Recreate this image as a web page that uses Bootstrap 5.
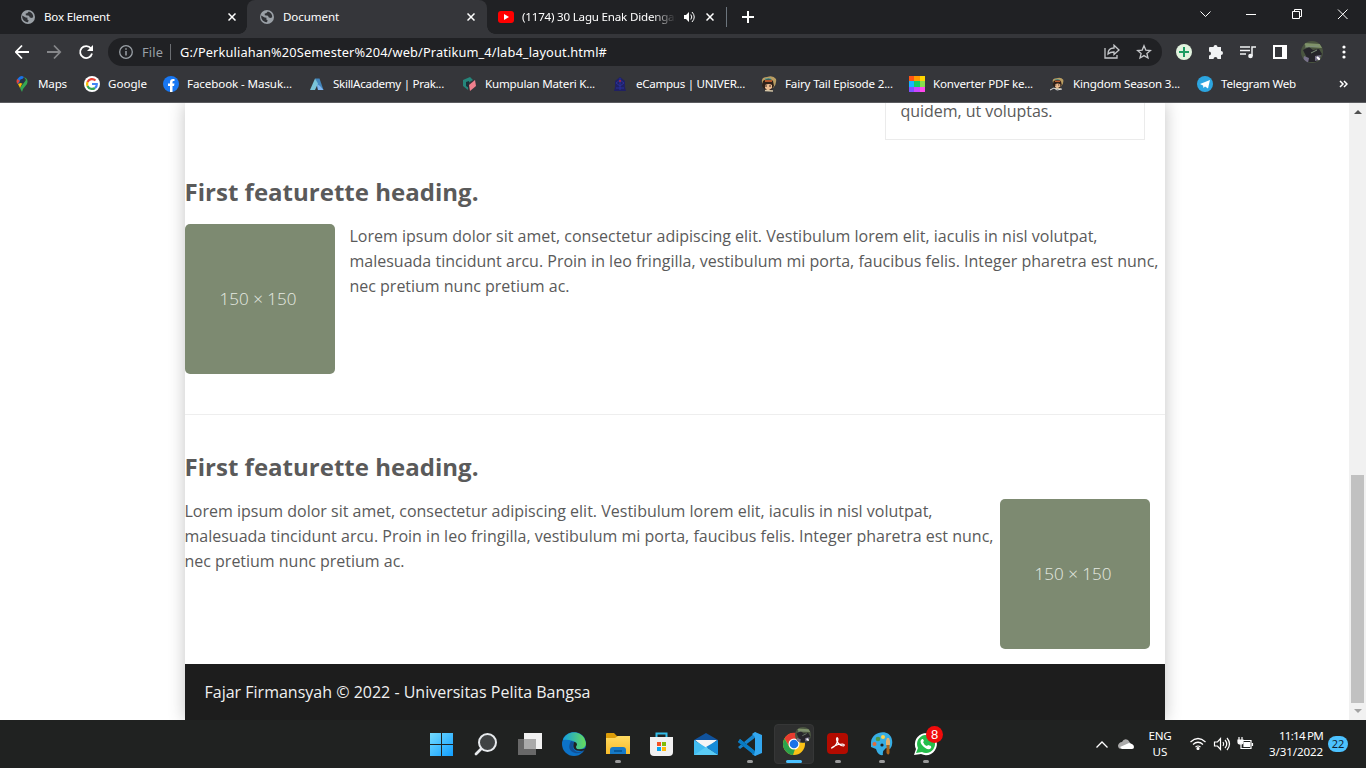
<!DOCTYPE html>
<html lang="en">
<head>
<meta charset="utf-8">
<title>Document</title>
<link rel="stylesheet" href="https://cdn.jsdelivr.net/npm/bootstrap@5.3.0/dist/css/bootstrap.min.css">
<style>
html,body{height:768px;overflow:hidden}
body{font-family:"Open Sans",sans-serif;background:#fff;color:#5a5a5a}
svg{display:block;flex:none}
.ui{font-family:"Noto Sans","Open Sans",sans-serif;font-size:11.6px;line-height:16px;color:#fff;white-space:nowrap}
.fit{display:inline-block;white-space:nowrap}
.tabstrip{height:34px;background:#202124;flex:none}
.tab{height:34px;width:240px;flex:none;padding-left:13px}
.tab.first-tab{width:247px;padding-left:21px}
.tab.last-tab{width:239px;padding-left:11px}
.tab.current{background:#35363a;border-radius:8px 8px 0 0;position:relative}
.tab.current::before,.tab.current::after{content:"";position:absolute;bottom:0;width:8px;height:8px}
.tab.current::before{left:-8px;background:radial-gradient(circle at 0 0,transparent 7.5px,#35363a 8px)}
.tab.current::after{right:-8px;background:radial-gradient(circle at 100% 0,transparent 7.5px,#35363a 8px)}
.tab-close{margin-left:auto;margin-right:12px}
.first-tab .tab-close{margin-right:11px}
.tab-title{margin-left:9px}
.fade-title{width:154px;overflow:hidden;margin-left:8px;-webkit-mask-image:linear-gradient(90deg,#000 130px,transparent)}
.toolbar{height:32px;background:#35363a;flex:none;padding-top:4px}
.omnibox{height:28px;width:1054px;border-radius:14px;background:#202124;margin-left:13px;padding-left:11px;padding-right:10px}
.url{font-size:12.8px}
.url-sep{width:1px;height:16px;background:#6b6e72;margin-left:7px;margin-right:9px}
.bookmarks{height:37px;background:#35363a;border-bottom:1px solid #5b5c60;flex:none;padding-left:14px}
.mark-grid{display:grid;grid-template-columns:70px 79px 146px 152px 151px 149px 148px 140px 148px 138px}
.view{height:617px;flex:none;overflow:hidden}
.sheet{width:980px;margin-left:184.5px;box-shadow:0 0 16px #c4c4c4;background:#fff}
.side{width:260px;height:37px;border:1px solid #ebebeb;border-top:0;margin-left:700px;padding-left:15px;line-height:17px}
.sheet section{padding-top:35px}
.sheet h2{font-size:24px;line-height:33px;font-weight:700;margin:0 0 16px;color:#5a5a5a}
.copy{font-size:16px;line-height:25px;margin:0}
.thumb{width:150px;height:150px;background:#7d8a71;border-radius:5px;color:#e6eae3;font-size:17px;font-weight:300;flex:none;padding-right:3px}
.foot{height:56px;background:#1d1d1d;color:#f0f0f0;padding-left:20px}
.scroll{width:17px;background:#f1f1f1}
.thumb-bar{width:13px;height:228px;background:#c1c1c1}
.taskbar{height:48px;background:#202221;flex:none}
.dock{margin-left:420px;width:528px}
.app{width:44px;height:48px;position:relative}
.app.active-app::before{content:"";position:absolute;inset:4px 2px;border-radius:4px;background:#2e2f2f;border:1px solid #363737}
.app svg{position:absolute;left:10px;top:12px}
.run::after{content:"";position:absolute;left:19px;top:40px;width:6px;height:3px;border-radius:2px;background:#9a9a9a}
.run.active-app::after{left:14px;width:16px;background:#4cc2ff}
.count{position:absolute;left:22px;top:6px;width:17px;height:17px;border-radius:50%;background:#f00b0b;color:#fff;font:13px/17px "Liberation Sans",sans-serif;text-align:center}
.tray{margin-left:148px}
.tray .lang{margin-left:13px;width:26px}
.tray .clock{margin-left:7px;width:62px}
.pill{width:20px;height:16px;border-radius:8px;background:#4cc2ff;color:#123;font-size:11px;text-align:center;margin-left:5px}
</style>
<script src="https://cdn.jsdelivr.net/npm/bootstrap@5.3.0/dist/js/bootstrap.bundle.min.js"></script>
</head>
<body class="d-flex flex-column m-0">
<svg width="0" height="0" class="position-absolute">
<defs>
<symbol id="globe" viewBox="0 0 14 14"><circle cx="7" cy="7" r="7" fill="#9aa0a6"/><path d="M1.2 5.5 4.7 7.6 6.5 7.8 6.3 9.6 7.6 10.3 7 12.2 5.2 12C2.7 11.2.9 8.5 1.2 5.5ZM7.8 1.5 6.2 3.3 4.7 3.6 4.8 5.3 8 5.7 8.8 7.5 11 8 12.2 7C12.3 4.2 10.6 2.1 7.8 1.5Z" fill="#303236"/></symbol>
<symbol id="close" viewBox="0 0 8 8"><path d="M.5.5l7 7M7.5.5l-7 7" stroke="#fff" stroke-width="1.5"/></symbol>
<symbol id="hero" viewBox="0 0 16 16"><path d="M1 6Q0 1 6 1 12-1 15 3 16 8 12 12H4Z" fill="#b99d62"/><path d="M2 5Q8 0 12 5l1 5-3 4H4L1 10Z" fill="#302119"/><path d="M4 3h6" stroke="#3aa0a6"/><path d="M4 5h7" stroke="#dd6934" stroke-width="1.5"/><path d="M4 9q4-2 7 0v3l-3 2H6L4 12Z" fill="#edbc91"/><path d="M5 9v2m4-2v2" stroke="#38221d"/><path d="M4 14.500l8 .5" stroke="#d4c5a5" stroke-width="1.500"/></symbol>
<linearGradient id="win" x2="1" y2="1"><stop stop-color="#75dcff"/><stop offset="1" stop-color="#109eff"/></linearGradient>
<linearGradient id="edg" x2="1"><stop stop-color="#149fe0"/><stop offset="1" stop-color="#67dd59"/></linearGradient>
<linearGradient id="fold" y2="1" x2="0"><stop stop-color="#ffdb62"/><stop offset="1" stop-color="#f8bb2a"/></linearGradient>
<clipPath id="round"><circle cx="11" cy="11" r="11"/></clipPath>
<symbol id="photo" viewBox="0 0 22 22"><g clip-path="url(#round)"><path fill="#4a5540" d="M0 0h22v22H0z"/><path fill="#7f9269" d="M3 2l16 1 2 4-16-1z"/><path fill="#26252b" d="M2 9l6-3 4 3 6-1 3 5-6 8H7l-2-6z"/><path fill="#77718a" d="M3 15l5 2-1 5-5-2zM14 15l6-1-2 5-4 1z"/><path d="M4 6l14-1M10 12l6-3" stroke="#7f907c" fill="none"/><path d="M16 16l3 3" stroke="#fff" stroke-width="2"/></g></symbol>
</defs></svg>

<header class="tabstrip ui d-flex align-items-center">
 <div class="tab first-tab d-flex align-items-center"><svg width="14" height="14"><use href="#globe"/></svg><span class="tab-title"><span class="fit" data-w="66">Box Element</span></span><svg class="tab-close" width="8" height="8"><use href="#close"/></svg></div>
 <div class="tab current d-flex align-items-center"><svg width="14" height="14"><use href="#globe"/></svg><span class="tab-title"><span class="fit" data-w="56">Document</span></span><svg class="tab-close" width="8" height="8"><use href="#close"/></svg></div>
 <div class="tab last-tab d-flex align-items-center"><svg width="16" height="12"><rect width="16" height="12" rx="3" fill="#f00"/><path d="M6 3l5 3-5 3z" fill="#fff"/></svg><span class="fade-title"><span class="fit" data-w="157">(1174) 30 Lagu Enak Didengar</span></span>
 <svg class="ms-2" width="11" height="10" viewBox="0 0 11 10"><path d="M0 3h2l3-3v10L2 7H0z" fill="#fff"/><path d="M6.8 2.5q2 2.5 0 5M8 0q4.500 5 0 10" stroke="#fff" fill="none"/></svg><svg class="tab-close" width="8" height="8"><use href="#close"/></svg></div>
 <div class="border-start border-secondary" style="height:20px"></div>
 <svg width="12" height="12" style="margin-left:15px"><path d="M6 0v12M0 6h12" stroke="#fff" stroke-width="2"/></svg>
 <svg class="ms-auto" width="149" height="14" viewBox="0 0 149 14" style="margin-right:17px;margin-bottom:6px" fill="none" stroke="#fff"><path d="M.5 4.500l5 5 5-5M46 7.500h10M92.500 4.500h7v7h-7zM94.500 4.500v-2h7v7h-2M138 2.500l9.500 9.500M147.500 2.500L138 12"/></svg>
</header>

<div class="toolbar ui d-flex align-items-center">
 <svg width="80" height="16" viewBox="0 0 80 16" fill="none" stroke-width="1.800" style="margin-left:15px"><path d="M14 8H1M7 1.500L.8 8 7 14.500" stroke="#fff"/><path d="M32 8h13M39 1.500L45.200 8 39 14.500" stroke="#86878a"/><path d="M76 4.500A6 6 0 1 0 77 9.500" stroke="#fff"/><path d="M78 1v6h-6z" fill="#fff"/></svg>
 <div class="omnibox d-flex align-items-center">
  <svg width="14" height="14"><circle cx="7" cy="7" r="6.300" fill="none" stroke="#9aa0a6" stroke-width="1.300"/><path d="M7 6v4.500M7 3.200v1.600" stroke="#9aa0a6" stroke-width="1.500"/></svg>
  <span class="url" style="color:#9aa0a6;margin-left:9px"><span class="fit" data-w="21">File</span></span><span class="url-sep"></span>
  <span class="url"><span class="fit" data-w="427">G:/Perkuliahan%20Semester%204/web/Pratikum_4/lab4_layout.html#</span></span>
  <svg class="ms-auto" width="48" height="16" viewBox="0 0 48 16" fill="none" stroke="#c5c7ca" stroke-width="1.300"><path d="M1 4v10h12v-3M4 10q0-6 6-6V1.200L15 6l-5 4.500V8Q6 8 4 10z"/><path d="M40 1.800l1.800 4.300 4.600.4-3.500 3 1.100 4.500-4-2.400-4 2.400 1.100-4.500-3.500-3 4.600-.4z"/></svg>
 </div>
 <svg width="16" height="16" style="margin-left:14px"><circle cx="8" cy="8" r="8" fill="#e2f3df"/><path d="M8 3v10M3 8h10" stroke="#1b9b61" stroke-width="2"/></svg>
 <svg width="16" height="16" viewBox="0 0 16 16" class="ms-3"><path fill="#f1f3f4" d="M1 4q0-1 1-1h3.500a2 2 0 1 1 4 0H13v4a2 2 0 1 1 0 4v4H9.500a2 2 0 0 0-4 0H1v-3.500a2 2 0 0 0 0-4z"/></svg>
 <svg width="16" height="14" viewBox="0 0 16 14" class="ms-3"><path d="M0 2h10M0 5.500h10M0 9h6M12 11V2h4" fill="none" stroke="#f1f3f4" stroke-width="1.500"/><circle cx="10.500" cy="11" r="2.300" fill="#f1f3f4"/></svg>
 <svg width="14" height="14" style="margin-left:17px"><path d="M1 1h12v12H1z" fill="none" stroke="#fff" stroke-width="2"/><path fill="#fff" d="M9 1h4v12H9z"/></svg>
 <svg width="22" height="22" style="margin-left:14px"><use href="#photo"/></svg>
 <svg width="4" height="14" style="margin-left:19px" fill="#fff"><circle cx="2" cy="2" r="1.600"/><circle cx="2" cy="7" r="1.600"/><circle cx="2" cy="12" r="1.600"/></svg>
</div>

<nav class="bookmarks ui d-flex align-items-center">
 <div class="mark-grid">
 <div class="d-flex gap-2"><svg width="16" height="16" viewBox="0 0 16 16"><path d="M3 4Q5 0 8 0L10 1 4 8Q2 6 3 4" fill="#1a73e8"/><path d="M3 3l3 2-3 3Q2 5 3 3" fill="#ea4335"/><path d="M10 1q5 2 3 7l-4 5-1 3-2-4 6-8" fill="#34a853"/><path d="M4 8l5-2-3 6z" fill="#fbbc04"/><circle cx="8" cy="5.300" r="2.200" fill="#253346"/></svg><span class="fit" data-w="29">Maps</span></div>
 <div class="d-flex gap-2"><svg width="16" height="16" viewBox="0 0 16 16" fill="none" stroke-width="2.200"><circle cx="8" cy="8" r="8" fill="#fff"/><path d="M11.500 4.500A5 5 0 0 0 3.500 6" stroke="#ea4335"/><path d="M3.500 6a5 5 0 0 0 0 4" stroke="#fbbc04"/><path d="M3.500 10a5 5 0 0 0 7.500 2" stroke="#34a853"/><path d="M11 12q2-1.500 1.800-4H8" stroke="#4285f4"/></svg><span class="fit" data-w="39">Google</span></div>
 <div class="d-flex gap-2"><svg width="16" height="16"><circle cx="8" cy="8" r="8" fill="#1877f2"/><path d="M7 16v-6H5V7.500h2V6q0-3 3-3h1.500v2H10.500Q9.500 5 9.500 6v1.500h2L11 10H9.500v6z" fill="#fff"/></svg><span class="fit" data-w="105">Facebook - Masuk...</span></div>
 <div class="d-flex gap-2"><svg width="16" height="16"><path d="M6 2.500h4.500l4 11.500H9z" fill="#4286bd"/><path d="M6 2.500l3 5-3 6.500H1z" fill="#79c3d8"/><path d="M8 8l3 2 3.500 4H9z" fill="#80b6ef"/></svg><span class="fit" data-w="111">SkillAcademy | Prak...</span></div>
 <div class="d-flex gap-2"><svg width="16" height="16"><path d="M2 4l7-3 3 3-5 3v7l-5-4z" fill="#25867b"/><path d="M8 9l6-5 1 6-6 5z" fill="#f0808d"/><path d="M5 6l3-1v7l-3-2z" fill="#1b3038"/></svg><span class="fit" data-w="110">Kumpulan Materi K...</span></div>
 <div class="d-flex gap-2"><svg width="16" height="16"><path d="M8 1l5 4v6l1 4H2l1-4V5z" fill="#202064"/><path d="M4 12h8M8 2v12M4 7l4-3 4 3-4 3z" stroke="#29309a" fill="none"/><circle cx="8" cy="5" r="1" fill="#b0213b"/></svg><span class="fit" data-w="109">eCampus | UNIVER...</span></div>
 <div class="d-flex gap-2"><svg width="16" height="16"><use href="#hero"/></svg><span class="fit" data-w="108">Fairy Tail Episode 2...</span></div>
 <div class="d-flex gap-2"><svg width="16" height="16"><path fill="#ff5415" d="M0 0h5v5H0z"/><path fill="#ff9b00" d="M5 0h6v5H5z"/><path fill="#ffd600" d="M11 0h5v5h-5z"/><path fill="#16b4ff" d="M0 5h5v6H0z"/><path fill="#12ce63" d="M5 5h6v6H5z"/><path fill="#87df4d" d="M11 5h5v6h-5z"/><path fill="#8050ff" d="M0 11h5v5H0z"/><path fill="#ca45ff" d="M5 11h6v5H5z"/><path fill="#ff48ed" d="M11 11h5v5h-5z"/></svg><span class="fit" data-w="100">Konverter PDF ke...</span></div>
 <div class="d-flex gap-2"><svg width="16" height="16"><use href="#hero" x="3" y="1" width="12" height="13"/><path d="M1 14l4-2 3 2 5-1" stroke="#ddd" fill="none"/></svg><span class="fit" data-w="107">Kingdom Season 3...</span></div>
 <div class="d-flex gap-2"><svg width="16" height="16"><circle cx="8" cy="8" r="8" fill="#2ca5e0"/><path d="M3 8l10-4-2 8.500-3-2-1.500 1.500L6 9.500z" fill="#fff"/></svg><span class="fit" data-w="75">Telegram Web</span></div>
 </div>
 <svg width="9" height="8" class="ms-1" fill="none" stroke="#fff" stroke-width="1.500"><path d="M1 1l3 3-3 3M5 1l3 3-3 3"/></svg>
</nav>

<div class="view d-flex">
 <main class="sheet">
  <aside class="side"><span class="fit" data-w="152">quidem, ut voluptas.</span></aside>
  <section style="height:274px">
   <h2><span class="fit" data-w="294">First featurette heading.</span></h2>
   <div class="d-flex" style="gap:15px"><div class="thumb d-flex align-items-center justify-content-center"><span class="fit" data-w="77">150 × 150</span></div>
   <p class="copy"><span class="fit" data-w="748">Lorem ipsum dolor sit amet, consectetur adipiscing elit. Vestibulum lorem elit, iaculis in nisl volutpat,</span><br><span class="fit" data-w="809">malesuada tincidunt arcu. Proin in leo fringilla, vestibulum mi porta, faucibus felis. Integer pharetra est nunc,</span><br><span class="fit" data-w="220">nec pretium nunc pretium ac.</span></p></div>
  </section>
  <section class="border-top" style="height:250px;--bs-border-color:#eee">
   <h2><span class="fit" data-w="294">First featurette heading.</span></h2>
   <div class="d-flex justify-content-between" style="padding-right:15px">
   <p class="copy"><span class="fit" data-w="748">Lorem ipsum dolor sit amet, consectetur adipiscing elit. Vestibulum lorem elit, iaculis in nisl volutpat,</span><br><span class="fit" data-w="809">malesuada tincidunt arcu. Proin in leo fringilla, vestibulum mi porta, faucibus felis. Integer pharetra est nunc,</span><br><span class="fit" data-w="220">nec pretium nunc pretium ac.</span></p><div class="thumb d-flex align-items-center justify-content-center"><span class="fit" data-w="77">150 × 150</span></div></div>
  </section>
  <footer class="foot d-flex align-items-center"><span class="fit" data-w="386">Fajar Firmansyah © 2022 - Universitas Pelita Bangsa</span></footer>
 </main>
 <div class="scroll ms-auto d-flex flex-column align-items-center">
  <svg width="8" height="4" style="margin-top:7px"><path d="M4 0l4 4H0z" fill="#505050"/></svg>
  <div class="thumb-bar mt-auto"></div>
  <svg width="8" height="4" style="margin:6px 0 7px"><path d="M0 0h8L4 4z" fill="#a3a3a3"/></svg>
 </div>
</div>

<footer class="taskbar ui d-flex align-items-center">
 <div class="dock d-flex">
  <div class="app"><svg width="24" height="24"><path fill="url(#win)" d="M0 1h11v11H0zM12 1h11v11H12zM0 13h11v11H0zM12 13h11v11H12z"/></svg></div>
  <div class="app"><svg width="24" height="24" fill="none" stroke="#e7eaed"><path d="M8 16l-6 6" stroke-width="2.800" stroke-linecap="round"/><circle cx="13.500" cy="10.500" r="8.500" fill="#404344" stroke-width="2"/></svg></div>
  <div class="app"><svg width="24" height="24"><path fill="#f1f1f1" d="M6 1h18v16H6z"/><path fill="#686868" d="M0 7h18v16H0z"/><path fill="#aaa" d="M6 7h12v10H6z"/></svg></div>
  <div class="app"><svg width="24" height="24"><circle cx="12" cy="12" r="12" fill="#0c72c8"/><path d="M1 8C4-2 20-2 23 8q3 7-4 9-7 1-5-3 1-4-3-5Q5 7 1 8" fill="url(#edg)"/><path d="M9 9q-5 9 4 12 6 1 9-3-8 5-11-2-1-3 1-6" fill="#125096"/><path d="M12 10q-3 9 7 9 3 0 5-2v-1q-4 2-9 1-2-2 0-4 0-3-3-3" fill="#202221"/></svg></div>
  <div class="app run"><svg width="24" height="24"><path d="M0 2q0-1 1-1h7l3 3h12v6H0z" fill="#dc9d08"/><path d="M0 6h9l3-2h12v18H0z" fill="url(#fold)"/><path d="M4 22v-4q0-3 3-3h10q3 0 3 3v4z" fill="#1679c6"/><path d="M8 19h8" stroke="#07599b" stroke-width="2"/></svg></div>
  <div class="app"><svg width="24" height="24"><path d="M6.500 6V1.500h10V6" fill="none" stroke="#32bde9" stroke-width="2"/><path d="M0 5h23v15q0 4-4 4H4q-4 0-4-4z" fill="#f1f1f1"/><path d="M7 10h4v4H7z" fill="#f35325"/><path d="M12 10h4v4h-4z" fill="#81bc06"/><path d="M7 15h4v4H7z" fill="#05a6f0"/><path d="M12 15h4v4h-4z" fill="#ffba08"/></svg></div>
  <div class="app"><svg width="24" height="24"><path d="M0 8l12-7 12 7v7H0z" fill="#10539d"/><path d="M1 8h22L12 17z" fill="#f5f5f5"/><path d="M0 8l24 15H0z" fill="#42bdf1"/><path d="M24 8v15L12 15z" fill="#168bd7"/><path d="M0 23l12-8 12 8z" fill="#59cbf5"/></svg></div>
  <div class="app run"><svg width="24" height="24"><path d="M2 7L18 20v4L0 10zM2 17L18 5V0L0 15z" fill="#1683ca"/><path d="M17 0l7 3v18l-7 3-3-2 3-3V5l-3-3z" fill="#33a7ef"/><path d="M2 7l15 12-1 4L0 10z" fill="#087bc3"/></svg></div>
  <div class="app run active-app"><svg width="34" height="30" style="top:6px;left:11px"><circle cx="11" cy="18" r="11" fill="#fbc116"/><path d="M1.500 12.500A11 11 0 0 1 21 13H11l-5 7z" fill="#e83c30"/><path d="M1.500 12.500L7 22l5 1-2 6A11 11 0 0 1 1.500 12.500" fill="#2ba24c"/><circle cx="11" cy="18" r="5.500" fill="#fff"/><circle cx="11" cy="18" r="4.300" fill="#1a73e8"/><use href="#photo" x="12" y="1" width="16" height="16"/></svg></div>
  <div class="app run"><svg width="22" height="24" style="left:11px"><rect y="1" width="21" height="21" rx="4" fill="#b30b00"/><path d="M5 16c3-1 6-6 6-9q-1-3-1.500 0c0 4 4 7 7 7q2-1.500-1-2-5 0-8 2-4 2.500-2.500 2" fill="none" stroke="#fff" stroke-width="1.200"/></svg></div>
  <div class="app run"><svg width="24" height="24"><path d="M1 10C2-1 20-4 22 8q1 6-2 9l-4-1q-4 3-3 7Q8 24 6 17L1 15z" fill="#37aee4"/><circle cx="8" cy="7" r="2.300" fill="#4d9847"/><circle cx="13" cy="5" r="2" fill="#ffd24b"/><circle cx="4.500" cy="12" r="2" fill="#e36a38"/><circle cx="12" cy="13" r="1.600" fill="#202221"/><path d="M16 9l1-3h2l1 3v4h-4z" fill="#e4b16f"/><path d="M16.500 13h3v8q-1 3-3 0z" fill="#ac641c"/></svg></div>
  <div class="app run"><svg width="24" height="24"><path d="M0 23l2-6A11 11 0 1 1 7 22z" fill="#fff"/><path d="M2 21l2-5a9 9 0 1 1 4 4z" fill="#25bd4b"/><path d="M8 7q-3 2 0 6 4 5 8 4 2-1 1-3l-3-1-1 1q-3-1-4-4l1-1-1-2z" fill="#fff"/></svg><span class="count">8</span></div>
 </div>
 <div class="tray d-flex align-items-center">
  <svg width="12" height="7" fill="none" stroke="#fff" stroke-width="1.300"><path d="M.5 6.500L6 1l5.500 5.500"/></svg>
  <svg width="16" height="12" style="margin-left:10px"><path d="M4 11Q0 11 0 7.500 1 4 4 4 6 0 10 2l3 4-2 5z" fill="#aaa"/><path d="M2 9l9-4 3 1q2 1 2 3 0 2-2 2H4z" fill="#fff"/></svg>
  <div class="lang d-flex flex-column align-items-center"><span class="fit" data-w="23">ENG</span><span class="fit" data-w="15">US</span></div>
  <svg width="64" height="16" viewBox="0 0 64 16" style="margin-left:17px" fill="none" stroke="#fff" stroke-width="1.200"><path d="M.5 6Q8-1 15.500 6M3 8.500q5-4.500 10 0M5.500 11q2.500-2 5 0"/><circle cx="8" cy="12.500" r="1" fill="#fff"/><path d="M24.500 6h3l3-3.500v11l-3-3.500h-3zM33 6q1.500 2 0 4M35 4q3.500 4 0 8M37 2q5 6 0 12"/><path d="M52 4.500h9v8H51V8M62.500 7v3"/><path d="M54 6.500h5.500v4H54z" fill="#fff"/><path d="M49 1v3m3-3v3M48 4h5v2q0 2-2.500 2T48 6z" fill="#fff"/></svg>
  <div class="clock d-flex flex-column align-items-end"><span class="fit" data-w="44">11:14 PM</span><span class="fit" data-w="54">3/31/2022</span></div>
  <div class="pill">22</div>
 </div>
</footer>
<script>
/* Set each label to its measured width */
document.querySelectorAll('.fit').forEach(function(el){
  var n=el.textContent.length, w=el.getBoundingClientRect().width;
  el.style.letterSpacing=((el.dataset.w-w)/n)+'px';
});
</script>
</body>
</html>
